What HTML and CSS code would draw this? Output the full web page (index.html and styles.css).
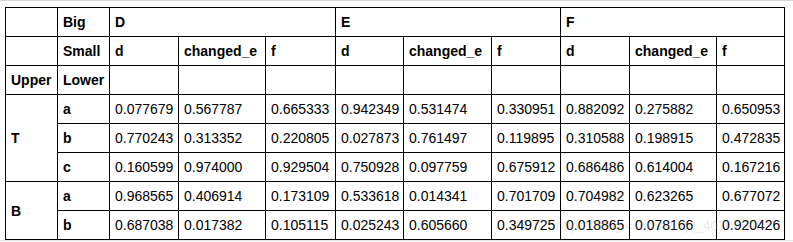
FILE: index.html
```html
<!DOCTYPE html>
<html>
<head>
<meta charset="utf-8">
<link rel="stylesheet" href="styles.css">
</head>
<body>
<div class="frame">
<table class="df">
<colgroup>
<col class="w52"><col class="w52"><col class="w69"><col class="w87"><col class="w70"><col class="w68"><col class="w88"><col class="w69"><col class="w69"><col class="w87"><col class="w68">
</colgroup>
<thead>
<tr><th></th><th>Big</th><th colspan="3">D</th><th colspan="3">E</th><th colspan="3">F</th></tr>
<tr><th></th><th>Small</th><th>d</th><th>changed_e</th><th>f</th><th>d</th><th>changed_e</th><th>f</th><th>d</th><th>changed_e</th><th>f</th></tr>
<tr><th>Upper</th><th>Lower</th><th></th><th></th><th></th><th></th><th></th><th></th><th></th><th></th><th></th></tr>
</thead>
<tbody>
<tr><th rowspan="3">T</th><th>a</th><td>0.077679</td><td>0.567787</td><td>0.665333</td><td>0.942349</td><td>0.531474</td><td>0.330951</td><td>0.882092</td><td>0.275882</td><td>0.650953</td></tr>
<tr><th>b</th><td>0.770243</td><td>0.313352</td><td>0.220805</td><td>0.027873</td><td>0.761497</td><td>0.119895</td><td>0.310588</td><td>0.198915</td><td>0.472835</td></tr>
<tr><th>c</th><td>0.160599</td><td>0.974000</td><td>0.929504</td><td>0.750928</td><td>0.097759</td><td>0.675912</td><td>0.686486</td><td>0.614004</td><td>0.167216</td></tr>
<tr><th rowspan="2">B</th><th>a</th><td>0.968565</td><td>0.406914</td><td>0.173109</td><td>0.533618</td><td>0.014341</td><td>0.701709</td><td>0.704982</td><td>0.623265</td><td>0.677072</td></tr>
<tr><th>b</th><td>0.687038</td><td>0.017382</td><td>0.105115</td><td>0.025243</td><td>0.605660</td><td>0.349725</td><td>0.018865</td><td>0.078166</td><td>0.920426</td></tr>
</tbody>
</table>
<div class="watermark">https://blog.csdn.net/qq_40709045</div>
</div>
</body>
</html>
```
FILE: styles.css
```css
html, body {
  margin: 0;
  padding: 0;
  background: #fff;
}
.frame {
  position: relative;
  width: 791px;
  height: 233px;
  padding: 6px 0 0 5px;
  box-sizing: content-box;
  border-top: 1px solid #d6d6d6;
  border-right: 1px solid #e2e2e2;
  border-bottom: 1px solid #e2e2e2;
  font-family: "Liberation Sans", Arial, sans-serif;
  font-size: 14px;
  color: #000;
  overflow: hidden;
}
.df {
  border-collapse: collapse;
  table-layout: fixed;
  width: 780px;
}
.w52 { width: 52px; }
.w68 { width: 68px; }
.w69 { width: 69px; }
.w70 { width: 70px; }
.w87 { width: 87px; }
.w88 { width: 88px; }
.df th, .df td {
  border: 1px solid #000;
  height: 28px;
  padding: 0 0 0 5px;
  text-align: left;
  vertical-align: middle;
  white-space: nowrap;
  overflow: hidden;
  line-height: 16px;
}
.df th {
  font-weight: bold;
}
.df td {
  font-weight: normal;
}
.watermark {
  position: absolute;
  left: 556px;
  top: 217px;
  font-size: 13.5px;
  color: rgba(170, 170, 170, 0.28);
  white-space: nowrap;
  pointer-events: none;
}
```
